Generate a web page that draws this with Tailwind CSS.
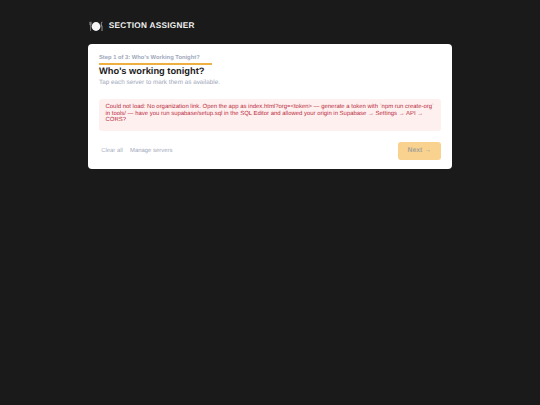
<!DOCTYPE html>
<html lang="en">
<head>
  <meta charset="UTF-8" />
  <title>Section Assigner</title>
  <script src="https://cdn.jsdelivr.net/npm/@tailwindcss/browser@4"></script>
</head>
<body class="bg-[#1a1a1a] h-[405px] overflow-hidden font-['Liberation_Sans',Arial,sans-serif] [text-rendering:geometricPrecision]">
  <div class="w-[363.5px] ml-[88.25px] pt-[18.5px]">

    <!-- Header -->
    <div class="flex items-center h-[16px] mb-[9px] pl-[1px]">
      <svg class="w-[14px] h-[11px] mr-[5.5px]" viewBox="0 0 14 11" fill="none">
        <circle cx="7" cy="5.500" r="4.400" fill="#f5f5f5"/>
        <path d="M0.700 .800v3M1.500 .800v3M2.300 .800v3M0.700 3.800h1.600M1.500 3.800V10" stroke="#b8b8b8" stroke-width="0.500"/>
        <path d="M13 .800c-.700 1-.800 2.500-.800 4h.800v5.200" stroke="#d0d0d0" stroke-width="0.700"/>
      </svg>
      <span class="text-[8.2px] leading-none font-bold tracking-[0.3px] text-[#f0f0f0]">SECTION ASSIGNER</span>
    </div>

    <!-- Card -->
    <div class="bg-white rounded-[4px] h-[125.5px] px-[10.75px] pt-[10px]">
      <div class="w-[113px] h-[11px] border-b-2 border-[#eeb040] text-[5.8px] leading-[8px] font-bold text-[#a0a8bb] whitespace-nowrap">Step 1 of 3: Who's Working Tonight?</div>
      <h1 class="text-[9.3px] leading-[12px] font-bold text-[#1a1a1a] mt-[0.500px]">Who's working tonight?</h1>
      <p class="text-[6.35px] leading-[8px] text-[#a0a8bb] mt-[2px]">Tap each server to mark them as available.</p>

      <div class="bg-[#fff0f0] rounded-[3px] h-[32px] mt-[11.500px] px-[6.5px] pt-[5.500px] text-[5.95px] leading-[6.5px] text-[#b92c3c]">
        Could not load: No organization link. Open the app as index.html?org=&lt;token&gt; — generate a token with `npm run create-org` in tools/ — have you run supabase/setup.sql in the SQL Editor and allowed your origin in Supabase → Settings → API → CORS?
      </div>

      <div class="flex items-center mt-[11.500px]">
        <span class="text-[5.9px] leading-[9px] mt-[1px] text-[#a9afbf] ml-[2.25px]">Clear all</span>
        <span class="text-[5.9px] leading-[9px] mt-[1px] text-[#a0a8bb] ml-[7.250px]">Manage servers</span>
        <div class="ml-auto w-[43.5px] h-[17.500px] bg-[#fad28f] rounded-[3px] flex items-center justify-center text-[6.8px] font-bold text-[#a8a395]">Next →</div>
      </div>
    </div>
  </div>
</body>
</html>
